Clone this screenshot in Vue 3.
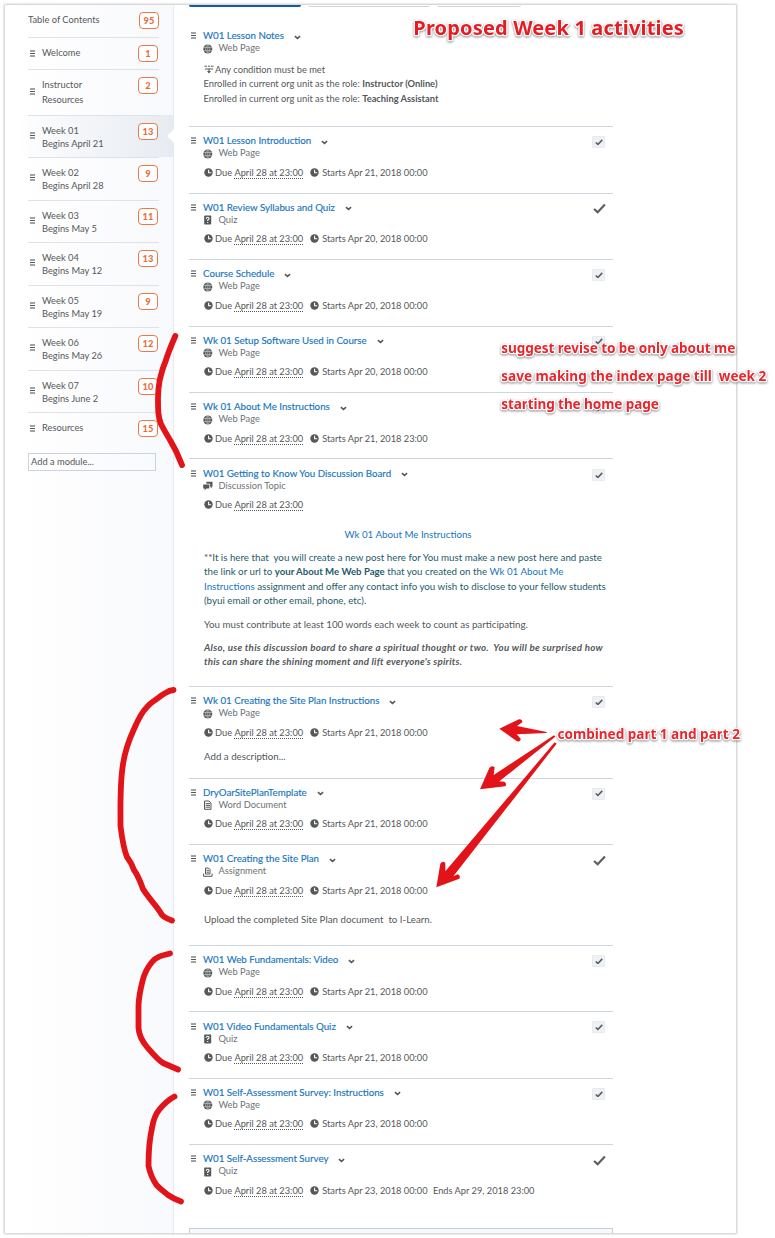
<script setup>
const modules = [
  { lines: ['Welcome'], count: 1 },
  { lines: ['Instructor', 'Resources'], count: 2, loose: true },
  { lines: ['Week 01', 'Begins April 21'], count: 13, active: true },
  { lines: ['Week 02', 'Begins April 28'], count: 9 },
  { lines: ['Week 03', 'Begins May 5'], count: 11 },
  { lines: ['Week 04', 'Begins May 12'], count: 13 },
  { lines: ['Week 05', 'Begins May 19'], count: 9 },
  { lines: ['Week 06', 'Begins May 26'], count: 12 },
  { lines: ['Week 07', 'Begins June 2'], count: 10 },
  { lines: ['Resources'], count: 15 },
]

const due = 'April 28 at 23:00'
const topics = [
  { title: 'W01 Lesson Notes', type: 'Web Page', icon: 'globe', kind: 'notes' },
  { title: 'W01 Lesson Introduction', type: 'Web Page', icon: 'globe', starts: 'Apr 21, 2018 00:00', check: 'box' },
  { title: 'W01 Review Syllabus and Quiz', type: 'Quiz', icon: 'quiz', starts: 'Apr 20, 2018 00:00', check: 'done' },
  { title: 'Course Schedule', type: 'Web Page', icon: 'globe', starts: 'Apr 20, 2018 00:00', check: 'box' },
  { title: 'Wk 01 Setup Software Used in Course', type: 'Web Page', icon: 'globe', starts: 'Apr 20, 2018 00:00', check: 'box' },
  { title: 'Wk 01 About Me Instructions', type: 'Web Page', icon: 'globe', starts: 'Apr 21, 2018 23:00', check: 'box' },
  { title: 'W01 Getting to Know You Discussion Board', type: 'Discussion Topic', icon: 'chat', check: 'box', kind: 'board' },
  { title: 'Wk 01 Creating the Site Plan Instructions', type: 'Web Page', icon: 'globe', starts: 'Apr 21, 2018 00:00', check: 'box', kind: 'describe' },
  { title: 'DryOarSitePlanTemplate', type: 'Word Document', icon: 'doc', starts: 'Apr 21, 2018 00:00', check: 'box' },
  { title: 'W01 Creating the Site Plan', type: 'Assignment', icon: 'assign', starts: 'Apr 21, 2018 00:00', check: 'done', kind: 'upload' },
  { title: 'W01 Web Fundamentals: Video', type: 'Web Page', icon: 'globe', starts: 'Apr 21, 2018 00:00', check: 'box' },
  { title: 'W01 Video Fundamentals Quiz', type: 'Quiz', icon: 'quiz', starts: 'Apr 21, 2018 00:00', check: 'box' },
  { title: 'W01 Self-Assessment Survey: Instructions', type: 'Web Page', icon: 'globe', starts: 'Apr 23, 2018 00:00', check: 'box' },
  { title: 'W01 Self-Assessment Survey', type: 'Quiz', icon: 'quiz', starts: 'Apr 23, 2018 00:00', ends: 'Apr 29, 2018 23:00', check: 'done', kind: 'last' },
]

const notes = [
  { x: 413.3, y: 35.3, w: 270.5, text: 'Proposed Week 1 activities', big: true },
  { x: 501.3, y: 353, w: 234, text: 'suggest revise to be only about me' },
  { x: 501.3, y: 381, w: 265, text: 'save making the index page till\u00a0 week 2' },
  { x: 501.3, y: 409, w: 157.5, text: 'starting the home page' },
  { x: 557.5, y: 739, w: 182.5, text: 'combined part 1 and part 2' },
]
</script>

<template>
  <div class="page">
    <div class="frame">
      <aside class="sidebar">
        <div class="toc">
          <span>Table of Contents</span>
          <span class="badge">95</span>
        </div>
        <div v-for="m in modules" :key="m.lines.join()" class="module" :class="{ active: m.active, loose: m.loose, single: m.lines.length === 1 }">
          <div class="module-row">
            <i class="handle"></i>
            <div class="module-name"><div v-for="l in m.lines" :key="l">{{ l }}</div></div>
            <span class="badge">{{ m.count }}</span>
          </div>
        </div>
        <div class="add-module">Add a module...</div>
      </aside>

      <main class="content">
        <div class="tabs"><i class="tab primary"></i><i class="tab second"></i><i class="tab third"></i></div>
        <section v-for="t in topics" :key="t.title" class="topic" :class="t.kind">
          <i class="handle"></i>
          <div class="body">
            <div class="title">
              <a>{{ t.title }}</a>
              <svg class="chevron" viewBox="0 0 7 5"><path d="M.9 1.1 3.5 3.4 6.1 1.1" /></svg>
            </div>
            <div class="type">
              <svg class="ticon" viewBox="0 0 10 10">
                <template v-if="t.icon === 'globe'">
                  <circle cx="4.8" cy="5" r="4.5" class="fill" />
                  <path d="M.4 3.5H9.2M.4 6.6H9.2M4.8 .6V9.4M4.8 .7C2 3 2 7 4.8 9.3M4.8 .7C7.6 3 7.6 7 4.8 9.3" class="cut" />
                </template>
                <template v-else-if="t.icon === 'quiz'">
                  <rect x="1.2" y=".4" width="7" height="9.2" rx=".8" class="fill" />
                  <path d="M3.3 3.7Q3.3 2.3 4.7 2.3T6.1 3.6Q6.1 4.5 4.7 5.1V6M4.7 6.9V7.9" class="white" />
                </template>
                <template v-else-if="t.icon === 'chat'">
                  <path d="M3.4 .8H9.5V5.6H8.7V7.4L7.1 5.6V2.7H3.4Z" class="fill" />
                  <path d="M.2 3.4H6.3V7.5H3.4L1.7 9.6V7.5H.2Z" class="fill" />
                </template>
                <template v-else-if="t.icon === 'doc'">
                  <path d="M1.5 1H6L8 3V9.3H1.5Z" class="line" />
                  <path d="M2.6 3.6H7M2.6 5.4H7M2.6 7.2H7" class="line" />
                </template>
                <template v-else>
                  <path d="M2.5 1H5.5L7 2.5V7H2.5ZM3.5 3.3H6M3.5 5.2H6" class="line" />
                  <path d="M.6 6.6V9.3H9.1V6.6" class="line" />
                </template>
              </svg>
              <span>{{ t.type }}</span>
            </div>

            <template v-if="t.kind === 'notes'">
              <div class="condition">
                <svg viewBox="0 0 10 9"><path d="M.5 1.2H3M4 1.2H6M7 1.2H9.5M1 4H9M5 3.8V7.5" class="line" /><path d="M3 6H7L5 8.6Z" class="fill" /></svg>
                <span>Any condition must be met</span>
              </div>
              <div class="role">Enrolled in current org unit as the role: <b>Instructor (Online)</b></div>
              <div class="role">Enrolled in current org unit as the role: <b>Teaching Assistant</b></div>
            </template>
            <div v-else class="dates">
              <svg class="clock" viewBox="0 0 9 9"><circle cx="4.5" cy="4.5" r="4.2" class="fill" /><path d="M4.6 1.8V4.8H7.2" class="white" /></svg>
              <span>Due <u>{{ due }}</u></span>
              <template v-if="t.starts">
                <svg class="clock next" viewBox="0 0 9 9"><circle cx="4.5" cy="4.5" r="4.2" class="fill" /><path d="M4.6 1.8V4.8H7.2" class="white" /></svg>
                <span>Starts {{ t.starts }}</span>
              </template>
              <span v-if="t.ends" class="ends">Ends {{ t.ends }}</span>
            </div>

            <div v-if="t.kind === 'board'" class="post">
              <p class="center"><a>Wk 01 About Me Instructions</a></p>
              <p class="teal">**It is here that&nbsp; you will create a new post here for You must make a new post here and paste<br>the link or url to <b>your About Me Web Page</b> that you created on the <a>Wk 01 About Me<br>Instructions</a> assignment and offer any contact info you wish to disclose to your fellow students<br>(byui email or other email, phone, etc).</p>
              <p>You must contribute at least 100 words each week to count as participating.</p>
              <p class="strong">Also, use this discussion board to share a spiritual thought or two.&nbsp; You will be surprised how<br><span>this can share the shining moment and lift everyone's spirits.</span></p>
            </div>
            <div v-if="t.kind === 'describe'" class="describe-text">Add a description...</div>
            <div v-if="t.kind === 'upload'" class="upload-text">Upload the completed Site Plan document&nbsp; to I-Learn.</div>
          </div>
          <span v-if="t.check" class="check" :class="t.check">
            <svg viewBox="0 0 12 10"><path d="M1 5.4 4.3 8.4 11 1.4" /></svg>
          </span>
        </section>
        <div class="next-box"></div>
      </main>
    </div>

    <svg class="markup" viewBox="0 0 775 1238">
      <g class="brush">
        <path d="M175.3 336C171 346 168 353 166 360C160 374 158 386 158 398C158 410 158 417 161 424C164 430 167 435 170 440L176 451L182 465" />
        <path d="M173.5 690C168 690.5 166 693 162 695C156 700 151 702 147 707C141 713 137 722 134 729C128 742 124 754 122.5 768C120 785 120.5 800 120.5 826C122 838 124 850 127 857C130 861 132 864 134 870C139 877 141 884 143 889C149 899 158 907 162 915Q165 918 172 920.5" />
        <path d="M170 953.5C160 956 156 957 152 962C147 968 144 975 142.5 981C140 991 138.7 998 138.5 1006V1028C139 1036 142 1041 147 1047C153 1054 158 1060 163 1063L178 1069.5" />
        <path d="M174.5 1096.5C168 1100 163 1105 159 1110C154 1116 153 1122 152 1128C149 1141 148.5 1150 148.5 1166C150 1173 153 1180 156.5 1185C160 1189 165 1192 168 1195Q174 1199 181 1201.5" />
      </g>
      <g class="arrows" transform="translate(420 680) scale(.33333)">
        <path d="M238 146 297 118Q308 116 307 127L291 138 380 156V159L290 163 302 176Q302 186 291 184Z" />
        <path d="M180 328 208 264Q215 254 224 262L221 285 402 166 406 170 238 304 253 305Q262 311 256 319Z" />
        <path d="M49 622 61 551Q68 541 76 549V574L404 187 410 191 100 589 113 583Q123 586 118 596Z" />
      </g>
      <text v-for="n in notes" :key="n.text" :x="n.x" :y="n.y" :textLength="n.w" :class="{ big: n.big }">{{ n.text }}</text>
    </svg>
  </div>
</template>

<style>
body { background: #fff; overflow: hidden; }
</style>

<style scoped>
.page {
  position: relative;
  width: 775px;
  height: 1238px;
  box-sizing: border-box;
  padding: 5px 0 0 5px;
  overflow: hidden;
  font: 9.3px/13px Lato, "Liberation Sans", sans-serif;
  color: #54585a;
}
.frame {
  width: 731px;
  height: 1228px;
  overflow: hidden;
  display: flex;
  background: #fff;
  box-shadow: 0 0 2px 1px #c8c8c8;
}
.sidebar {
  width: 169px;
  flex: none;
  box-sizing: border-box;
  border-right: 1px solid #e6eaf0;
  background: linear-gradient(90deg, #fff 0, #fff 15px, #f8f9fc 100%);
}
.toc {
  height: 32px;
  margin: 0 14px 0 23px;
  display: flex;
  justify-content: space-between;
  align-items: flex-start;
  line-height: 30px;
}
.toc .badge { margin-top: 7px; }
.badge {
  flex: none;
  width: 20px;
  height: 17px;
  box-sizing: border-box;
  border: 1px solid #e8794a;
  border-radius: 4px;
  background: #fff;
  color: #e4703f;
  font-weight: 900;
  line-height: 15.5px;
  text-align: center;
}
.module { padding: 0 14px 0 23px; height: 42.5px; }
.module.single { height: 32.2px; }
.module.loose { height: 45.8px; line-height: 15px; }
.module-row {
  height: 100%;
  box-sizing: border-box;
  border-top: 1px solid #dde2eb;
  padding: 8px 1px 0 2px;
  display: flex;
}
.module-name { flex: 1; margin-left: 7px; }
.module.loose .module-name { margin-top: -1px; }
.module .badge { margin-top: -1px; }
.handle {
  width: 5px;
  height: 7px;
  flex: none;
  background: linear-gradient(#a0a2a4 0 2px, transparent 2px 3px, #55585a 3px 4px, transparent 4px 5px, #a0a2a4 5px 7px);
}
.module .handle { margin-top: 8px; }
.module.loose .handle { margin-top: 9.5px; }
.module.single .handle { margin-top: 3.5px; }
.module.active {
  position: relative;
  background: linear-gradient(90deg, transparent 12px, #f3f5f8 50%, #e7ebf1);
}
.module.active::after {
  content: "";
  position: absolute;
  right: -1px;
  top: 14px;
  border: 7px solid transparent;
  border-left: 0;
  border-right-color: #fff;
}
.add-module {
  margin: 8.4px 0 0 23px;
  width: 128px;
  height: 18px;
  box-sizing: border-box;
  border: 1px solid #cbd3e2;
  padding-left: 2px;
  line-height: 16.5px;
}
.content { width: 424px; margin-left: 15px; flex: none; }
.tabs { display: flex; gap: 7px; height: 15.4px; }
.tab { height: 2px; box-sizing: border-box; border-bottom: 1px solid #cdd5dc; border-radius: 0 0 3px 3px; }
.tab.primary { width: 112px; background: #0f5f9c; border-color: #0f5f9c; }
.tab.second { width: 122px; }
.tab.third { width: 84px; }
.topic {
  height: 66.43px;
  box-sizing: border-box;
  border-top: 1px solid #cdd5de;
  padding: 7.1px 0 0 2px;
  display: flex;
}
.topic.notes { height: 105.9px; border-color: transparent; padding-top: 7.7px; }
.topic.board { height: 227.3px; padding-top: 7.5px; }
.topic.describe { height: 92px; padding-top: 7.5px; }
.topic.upload { height: 100.9px; }
.topic.last { height: 83.6px; }
.topic .handle { margin-top: 3px; }
.body { flex: 1; margin-left: 7px; min-width: 0; white-space: nowrap; }
.title { font-size: 9.72px; display: flex; align-items: center; }
a { color: #1876c0; }
.title a { -webkit-text-stroke: .15px #1876c0; }
.chevron { width: 7px; height: 5px; margin: 3px 0 0 10px; fill: none; stroke: #54585a; stroke-width: 1.5; }
.type { height: 12px; line-height: 12px; display: flex; color: #6d7274; }
.ticon { width: 10px; height: 10px; margin: 1.5px 5.5px 0 0; }
.fill { fill: #54585a; }
.line { fill: none; stroke: #54585a; stroke-width: 1; }
.cut { fill: none; stroke: #d8dadb; stroke-width: .55; }
.white { fill: none; stroke: #fff; stroke-width: 1.1; }
.dates { margin: 6.5px 0 0 1px; height: 13px; display: flex; align-items: center; font-size: 9.27px; }
.clock { width: 9px; height: 9px; margin-right: 2px; }
.clock.next { margin-left: 7px; margin-right: 3px; }
.dates u { text-decoration: none; border-bottom: 1px dotted #54585a; display: inline-block; line-height: 10px; }
.ends { margin-left: 5.3px; }
.condition { display: flex; align-items: center; margin: 8.8px 0 0 1px; height: 13px; }
.condition svg { width: 10px; height: 9px; margin-right: 1px; }
.role { margin-left: .5px; line-height: 15px; }
.post { margin-left: 1px; font-size: 9.76px; line-height: 14.2px; padding-top: 15.5px; }
.post p { margin: 0 0 9px; }
.post .center { width: 408px; text-align: center; }
.post .teal { color: #245b68; margin-bottom: 10px; }
.post .teal b { font-size: 9.65px; }
.post .strong { font-weight: 700; font-style: italic; letter-spacing: .255px; }
.post .strong span { letter-spacing: .2px; }
.describe-text { margin: 11px 0 0 1px; font-size: 9.72px; }
.upload-text { margin: 15.9px 0 0 1px; font-size: 9.72px; }
.check { flex: none; width: 13px; height: 12px; margin: 1.9px 8px 0 0; display: flex; align-items: center; justify-content: center; }
.check svg { width: 13px; height: 11px; fill: none; stroke: #5a5e60; stroke-width: 2; }
.check.done { margin-right: 7.5px; }
.check.box { background: #eff1f4; border-radius: 2px; box-shadow: inset 0 0 0 .5px #dfe3e8; }
.check.box svg { width: 8px; height: 6.5px; stroke-width: 2.5; }
.next-box { height: 20px; border: 1px solid #c3cedb; background: #f7f9fb; }
.markup { position: absolute; left: 0; top: 0; width: 775px; height: 1238px; overflow: visible; }
.brush { fill: none; stroke: #e11419; stroke-width: 5.8; stroke-linecap: round; stroke-linejoin: round; }
.arrows { fill: #e3131a; }
.markup text {
  font: 700 13.6px "Noto Sans", sans-serif;
  white-space: pre;
  fill: #e7262d;
  stroke: #fff;
  stroke-width: 2.6px;
  stroke-linejoin: round;
  paint-order: stroke;
  filter: drop-shadow(0 1px 1px rgba(0, 0, 0, .45));
}
.markup text.big { font-size: 20px; fill: #e51c23; }
</style>
